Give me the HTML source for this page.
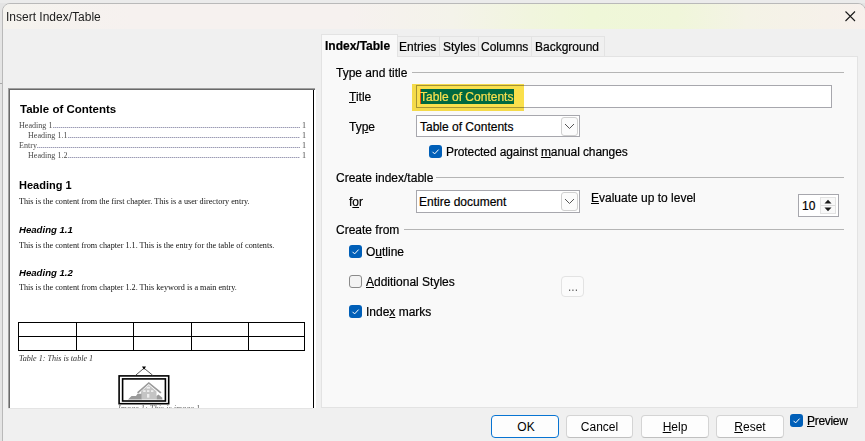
<!DOCTYPE html>
<html><head><meta charset="utf-8">
<style>
*{margin:0;padding:0;box-sizing:border-box}
html,body{width:865px;height:441px;overflow:hidden;background:#e4e4e4}
body{position:relative;font-family:"Liberation Sans",sans-serif;font-size:12px;color:#000}
.a{position:absolute}
.t{position:absolute;line-height:14px;white-space:nowrap;-webkit-text-stroke-width:0.2px}
#win{left:2px;top:3px;width:864px;height:445px;background:#f0f0f0;border:1px solid #b9b9b9;border-radius:8px 8px 0 0;overflow:hidden}
#tb{left:0;top:0;width:865px;height:25px;background:linear-gradient(90deg,#f5f3ee 0%,#f6f1ef 15%,#f6f1ef 40%,#f4f3ea 52%,#f1f5de 61%,#eff7d8 68%,#f0f6da 78%,#f4f3e6 86%,#f7f0ec 100%)}
.u{text-decoration:underline;text-underline-offset:1px}
.sep{position:absolute;height:1px;background:#b5b5b5}
.cb{position:absolute;width:13px;height:13px;border-radius:3px;background:#005fb8}
.cb svg{position:absolute;left:0;top:0}
.cbx{position:absolute;width:13px;height:13px;border-radius:3px;background:#f3f3f3;border:1px solid #8a8a8a}
.inp{position:absolute;background:#fff;border:1px solid #a7a7ad}
.btn{position:absolute;height:23px;background:#fdfdfd;border:1px solid #d4d4d4;border-bottom-color:#c0c0c0;border-radius:4px;text-align:center;line-height:23px}
.tab{position:absolute;top:36px;height:20px;background:#f0f0f0;border:1px solid #e3e3e3;border-bottom:none}
#pv{left:8px;top:88px;width:307px;height:320px;background:#fff;border-top:1px solid #a0a0a0;border-left:1px solid #a0a0a0;overflow:hidden;box-shadow:inset 1px 1px 0 #696969}
.pt{position:absolute;white-space:nowrap;line-height:1;color:#000}
.ser{font-family:"Liberation Serif",serif;font-size:8.2px;color:#111}
.ld{position:absolute;display:flex;align-items:flex-end;height:9px;font-family:"Liberation Serif",serif;font-size:8.1px;line-height:9px;color:#4a4a4a}
.ld i{flex:1;background:repeating-linear-gradient(90deg,#9c9cb4 0 1px,#d4d4e0 1px 2px);margin:0 2px 2px 0;height:1px}
.ld b{font-weight:normal}
.toc{font-family:"Liberation Serif",serif;font-size:7.8px;color:#111}
</style></head><body>
<div class="a" style="left:0;top:0;width:865px;height:3px;background:#ebebeb"></div>
<div class="a" style="left:0;top:83px;width:2px;height:1px;background:#a8a8a8"></div>
<div id="win" class="a">
  <div id="tb" class="a"></div>
</div>
<div class="t" style="left:6px;top:10px;-webkit-text-stroke-width:0;color:#1c1c1c">Insert Index/Table</div>
<svg class="a" style="left:844px;top:10px" width="12" height="12" viewBox="0 0 12 12"><path d="M1.5 1.5L11 11M11 1.5L1.5 11" stroke="#1a1a1a" stroke-width="1.1"/></svg>

<!-- preview -->
<div id="pv" class="a">
  <div class="pt" style="left:11px;top:15px;font-weight:bold;font-size:11.5px">Table of Contents</div>
  <div class="ld" style="left:10px;top:32px;width:287px"><span>Heading 1</span><i></i><b>1</b></div>
  <div class="ld" style="left:19px;top:42px;width:278px"><span>Heading 1.1</span><i></i><b>1</b></div>
  <div class="ld" style="left:10px;top:52px;width:287px"><span>Entry</span><i></i><b>1</b></div>
  <div class="ld" style="left:19px;top:62px;width:278px"><span>Heading 1.2</span><i></i><b>1</b></div>
  <div class="pt" style="left:10px;top:91px;font-weight:bold;font-size:11px">Heading 1</div>
  <div class="pt ser" style="left:10px;top:109px">This is the content from the first chapter. This is a user directory entry.</div>
  <div class="pt" style="left:10px;top:136px;font-weight:bold;font-style:italic;font-size:9.6px">Heading 1.1</div>
  <div class="pt ser" style="left:10px;top:153px">This is the content from chapter 1.1. This is the entry for the table of contents.</div>
  <div class="pt" style="left:10px;top:179px;font-weight:bold;font-style:italic;font-size:9.6px">Heading 1.2</div>
  <div class="pt ser" style="left:10px;top:195px">This is the content from chapter 1.2. This keyword is a main entry.</div>
  <svg class="a" style="left:1px;top:1px" width="308" height="320">
    <g stroke="#000" stroke-width="1" fill="none" shape-rendering="crispEdges">
      <rect x="8.5" y="232.5" width="286" height="28"/>
      <path d="M8 246.5H295M66.5 232V261M123.5 232V261M181.5 232V261M238.5 232V261"/>
    </g>
  </svg>
  <svg class="a" style="left:-9px;top:-89px" width="320" height="420" viewBox="0 0 320 420">
    <g fill="none" stroke="#000">
      <rect x="119.1" y="375.9" width="49.6" height="27.8" stroke-width="1.6"/>
      <rect x="122.6" y="378.9" width="42.8" height="22.1" stroke-width="1.6"/>
      <path d="M135.7 375.2L144 368.2L152.6 375.2" stroke="#444" stroke-width="0.9"/>
    </g>
    <path d="M142 366.5h4l-2 3.2z" fill="#000"/>
    <g fill="#9a9a9a">
      <path d="M137 392.2L148.8 382L161.5 392.2L160.3 393.4L148.8 384L138.2 393.4z"/>
      <path d="M141 391.5L148.8 385L156.5 391.5V399.6H141z" fill="#c4c4c4"/>
      <path d="M128 399.6L131.5 396L136 396L137.5 393.7L141.5 393.7V399.6z"/>
      <path d="M156.5 396L158.5 394.5L162 397.5L162.5 399.6H156.5z"/>
      <rect x="146.6" y="386.8" width="3.4" height="1.8" fill="#eee"/>
      <rect x="143.2" y="390.2" width="2.4" height="1.8" fill="#eee"/>
      <rect x="147" y="390.2" width="2.4" height="1.8" fill="#eee"/>
      <rect x="151" y="390.2" width="2.4" height="1.8" fill="#eee"/>
      <rect x="147" y="394" width="2.4" height="3.6" fill="#eee"/>
    </g>
  </svg>
  <div class="pt" style="left:10px;top:266px;font-family:'Liberation Serif',serif;font-style:italic;font-size:8.1px;color:#333">Table 1: This is table 1</div>
  <div class="pt" style="left:109px;top:316px;font-family:'Liberation Serif',serif;font-style:italic;font-size:8.3px;color:#666">Image 1: This is image 1</div>
</div>

<div class="a" style="left:313px;top:90px;width:1px;height:318px;background:#000"></div>
<div class="a" style="left:314px;top:90px;width:2px;height:318px;background:#fff"></div>
<div class="a" style="left:8px;top:408px;width:305px;height:1px;background:#e4e4e4"></div>
<!-- tabs -->
<div class="tab" style="left:397px;width:43px"></div>
<div class="tab" style="left:439px;width:40px"></div>
<div class="tab" style="left:478px;width:54px"></div>
<div class="tab" style="left:531px;width:74px"></div>
<div class="a" style="left:321px;top:56px;width:537px;height:352px;background:#f9f9f9;border:1px solid #e3e3e3"></div>
<div class="a" style="left:321px;top:34px;width:77px;height:23px;background:#f9f9f9;border:1px solid #e3e3e3;border-bottom:none"></div>
<div class="t" style="left:325px;top:39px;font-weight:bold">Index/Table</div>
<div class="t" style="left:399px;top:40px">Entries</div>
<div class="t" style="left:443px;top:40px">Styles</div>
<div class="t" style="left:481px;top:40px">Columns</div>
<div class="t" style="left:535px;top:40px">Background</div>

<div class="t" style="left:336px;top:66px">Type and title</div>
<div class="sep" style="left:412px;top:72px;width:432px"></div>
<div class="t" style="left:349px;top:90px"><span class="u">T</span>itle</div>
<div class="inp" style="left:416px;top:85px;width:416px;height:23px"></div>
<div class="a" style="left:420px;top:89px;width:94px;height:15px;background:#0078d7"></div>
<div class="a" style="left:420px;top:89px;width:1px;height:15px;background:#ff5a00"></div>
<div class="t" style="left:420px;top:90px;color:#fff">Table of Contents</div>
<div class="a" style="left:412px;top:84px;width:112px;height:27px;background:#fae04c;mix-blend-mode:multiply"></div>

<div class="t" style="left:349px;top:120px">Ty<span class="u">p</span>e</div>
<div class="inp" style="left:416px;top:115px;width:164px;height:22px"></div>
<div class="t" style="left:420px;top:120px">Table of Contents</div>
<div class="a" style="left:561px;top:117px;width:17px;height:19px;border:1px solid #d0d0d0;border-radius:3px;background:#fcfcfc"></div>
<svg class="a" style="left:563px;top:122px" width="13" height="9" viewBox="0 0 13 9"><path d="M2 2L6.5 6.5L11 2" fill="none" stroke="#555" stroke-width="1"/></svg>

<div class="cb" style="left:429px;top:145px"><svg width="13" height="13" viewBox="0 0 13 13"><path d="M3.5 6.8L5.6 8.9L9.6 4.6" fill="none" stroke="#fff" stroke-width="1"/></svg></div>
<div class="t" style="left:446px;top:145px;letter-spacing:-0.1px">Protected against <span class="u">m</span>anual changes</div>

<div class="t" style="left:336px;top:171px">Create index/table</div>
<div class="sep" style="left:436px;top:177px;width:408px"></div>
<div class="t" style="left:349px;top:195px">f<span class="u">o</span>r</div>
<div class="inp" style="left:416px;top:190px;width:164px;height:23px"></div>
<div class="t" style="left:419px;top:195px">Entire document</div>
<div class="a" style="left:561px;top:192px;width:17px;height:19px;border:1px solid #d0d0d0;border-radius:3px;background:#fcfcfc"></div>
<svg class="a" style="left:563px;top:197px" width="13" height="9" viewBox="0 0 13 9"><path d="M2 2L6.5 6.5L11 2" fill="none" stroke="#555" stroke-width="1"/></svg>
<div class="t" style="left:591px;top:191px"><span class="u">E</span>valuate up to level</div>
<div class="inp" style="left:798px;top:194px;width:41px;height:23px"></div>
<div class="t" style="left:802px;top:199px">10</div>
<div class="a" style="left:820px;top:197px;width:16px;height:17px;background:#f9f9f9;border:1px solid #e3e3e3"></div>
<div class="a" style="left:821px;top:205px;width:14px;height:1px;background:#dcdcdc"></div>
<svg class="a" style="left:820px;top:197px" width="16" height="17" viewBox="0 0 16 17"><path d="M4.5 6.5L8 2.8L11.5 6.5z" fill="#1a1a1a"/><path d="M4.5 10.5L8 14.2L11.5 10.5z" fill="#1a1a1a"/></svg>

<div class="t" style="left:336px;top:223px">Create from</div>
<div class="sep" style="left:404px;top:229px;width:440px"></div>
<div class="cb" style="left:349px;top:245px"><svg width="13" height="13" viewBox="0 0 13 13"><path d="M3.5 6.8L5.6 8.9L9.6 4.6" fill="none" stroke="#fff" stroke-width="1"/></svg></div>
<div class="t" style="left:366px;top:245px">O<span class="u">u</span>tline</div>
<div class="cbx" style="left:349px;top:275px"></div>
<div class="t" style="left:366px;top:275px"><span class="u">A</span>dditional Styles</div>
<div class="a" style="left:561px;top:276px;width:23px;height:21px;border:1px solid #e3e3e3;border-radius:4px;background:#fbfbfb"></div>
<svg class="a" style="left:568px;top:289px" width="10" height="3"><rect x="1" y="0.5" width="1.2" height="1.5" fill="#666"/><rect x="4.3" y="0.5" width="1.2" height="1.5" fill="#666"/><rect x="7.8" y="0.5" width="1.2" height="1.5" fill="#666"/></svg>
<div class="cb" style="left:349px;top:305px"><svg width="13" height="13" viewBox="0 0 13 13"><path d="M3.5 6.8L5.6 8.9L9.6 4.6" fill="none" stroke="#fff" stroke-width="1"/></svg></div>
<div class="t" style="left:366px;top:305px">Inde<span class="u">x</span> marks</div>

<!-- buttons -->
<div class="btn" style="left:491px;top:415px;width:68px;border:1px solid #0874d2;padding-left:2px">OK</div>
<div class="btn" style="left:566px;top:415px;width:67px;">Cancel</div>
<div class="btn" style="left:641px;top:415px;width:68px;"><span class="u">H</span>elp</div>
<div class="btn" style="left:716px;top:415px;width:68px;"><span class="u">R</span>eset</div>
<div class="cb" style="left:790px;top:414px"><svg width="13" height="13" viewBox="0 0 13 13"><path d="M3.5 6.8L5.6 8.9L9.6 4.6" fill="none" stroke="#fff" stroke-width="1"/></svg></div>
<div class="t" style="left:807px;top:414px;letter-spacing:-0.3px"><span class="u">P</span>review</div>
</body></html>
